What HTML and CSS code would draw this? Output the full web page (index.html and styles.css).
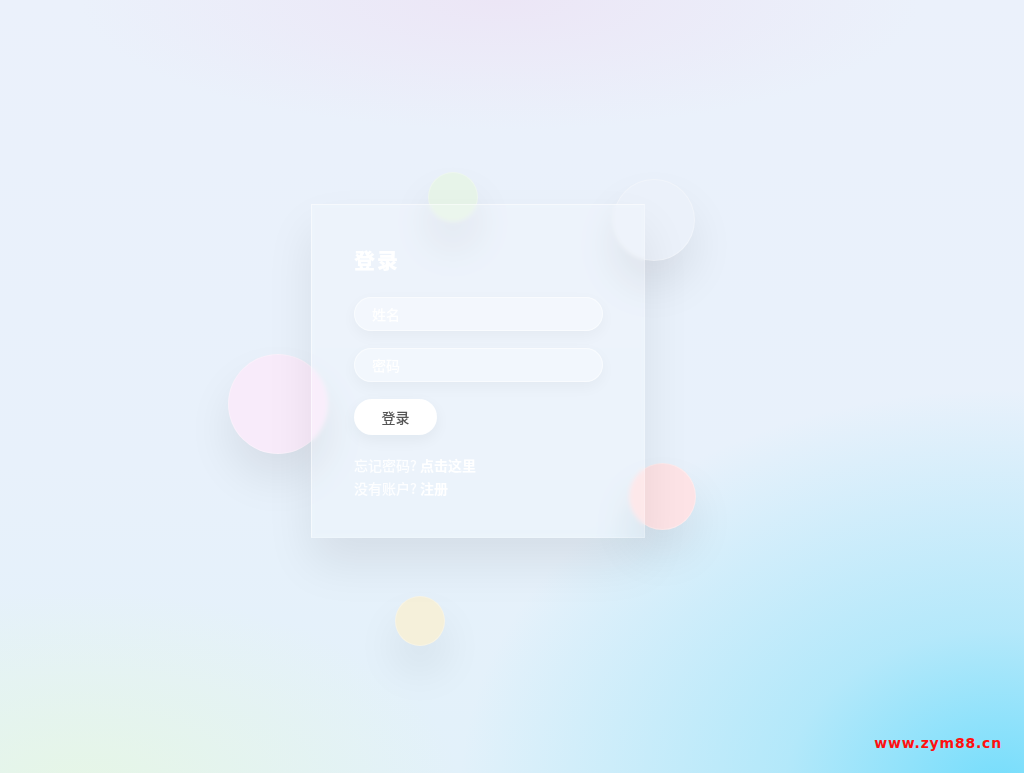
FILE: index.html
```html
<!DOCTYPE html>
<html lang="zh">
<head>
<meta charset="utf-8">
<title>登录</title>
<link rel="stylesheet" href="styles.css">
</head>
<body>
<div class="page">
  <div class="stage">
    <span class="bubble b-green"></span>
    <span class="bubble b-white"></span>
    <span class="bubble b-pink"></span>
    <span class="bubble b-red"></span>
    <span class="bubble b-yellow"></span>
    <form class="card">
      <h2 class="title">登录</h2>
      <input class="field" type="text" placeholder="姓名">
      <input class="field" type="password" placeholder="密码">
      <button class="btn" type="button">登录</button>
      <p class="link">忘记密码? <b>点击这里</b></p>
      <p class="link">没有账户? <b>注册</b></p>
    </form>
  </div>
  <div class="mark">www.zym88.cn</div>
</div>
</body>
</html>
```

FILE: styles.css
```css
html, body {
  margin: 0;
  padding: 0;
}
body {
  font-family: "Noto Sans CJK SC", "Noto Sans", sans-serif;
  width: 1024px;
  height: 773px;
  overflow: hidden;
}
.page {
  position: relative;
  width: 1024px;
  height: 773px;
  box-sizing: border-box;
  padding: 204px 0 0 311px;
  background:
    radial-gradient(ellipse 540px 400px at 1000px 790px, rgba(110, 220, 252, 0.95) 0%, rgba(140, 225, 250, 0.55) 40%, rgba(200, 235, 250, 0) 100%),
    radial-gradient(ellipse 380px 200px at 80px 790px, rgba(230, 246, 230, 1) 0%, rgba(232, 244, 238, 0) 100%),
    radial-gradient(ellipse 420px 130px at 500px 0px, rgba(236, 230, 246, 1) 0%, rgba(236, 232, 247, 0) 100%),
    linear-gradient(180deg, #ebf1fb 0%, #e8f1fb 60%, #e2f1fa 100%);
}
.stage {
  position: relative;
  width: 334px;
  height: 334px;
}
.bubble {
  position: absolute;
  border-radius: 50%;
  box-shadow: 0 25px 45px rgba(0, 0, 0, 0.08);
  border: 1px solid rgba(255, 255, 255, 0.3);
  box-sizing: border-box;
}
.b-green {
  left: 117px; top: -32px; width: 50px; height: 50px;
  background: #e7f4e9;
}
.b-white {
  left: 302px; top: -25px; width: 82px; height: 82px;
  background: #ebf1fa;
}
.b-pink {
  left: -83px; top: 150px; width: 100px; height: 100px;
  background: #f8ebfa;
}
.b-red {
  left: 318px; top: 259px; width: 67px; height: 67px;
  background: #fde3e6;
}
.b-yellow {
  left: 84px; top: 392px; width: 50px; height: 50px;
  background: #f5f0da;
}
.card {
  position: relative;
  width: 334px;
  height: 334px;
  box-sizing: border-box;
  margin: 0;
  padding: 38px 42px 0 42px;
  display: flex;
  flex-direction: column;
  align-items: flex-start;
  background: rgba(255, 255, 255, 0.18);
  border: 1px solid rgba(255, 255, 255, 0.5);
  border-right-color: rgba(255, 255, 255, 0.2);
  border-bottom-color: rgba(255, 255, 255, 0.2);
  box-shadow: 0 25px 45px rgba(0, 0, 0, 0.08);
  backdrop-filter: blur(2px);
}
.title {
  margin: 0 0 22px 0;
  font-size: 21px;
  line-height: 32px;
  font-weight: 900;
  letter-spacing: 2px;
  color: #ffffff;
}
.field {
  width: 249px;
  height: 34px;
  box-sizing: border-box;
  margin: 0 0 17px 0;
  padding: 0 17px;
  border-radius: 17px;
  border: 1px solid rgba(255, 255, 255, 0.5);
  background: rgba(255, 255, 255, 0.32);
  box-shadow: 0 5px 15px rgba(0, 0, 0, 0.04);
  font-family: inherit;
  font-size: 14px;
  font-weight: 500;
  color: #fff;
  outline: none;
}
.field::placeholder {
  color: #ffffff;
}
.btn {
  width: 83px;
  height: 36px;
  border: none;
  border-radius: 18px;
  background: #ffffff;
  box-shadow: 0 5px 15px rgba(0, 0, 0, 0.05);
  font-family: inherit;
  font-size: 14px;
  font-weight: 500;
  color: #555555;
  margin: 0 0 19px 0;
  padding: 0;
  cursor: pointer;
}
.link {
  margin: 0;
  font-size: 14px;
  line-height: 23px;
  font-weight: 500;
  color: rgba(255, 255, 255, 0.9);
}
.link b {
  font-weight: 700;
  color: #ffffff;
}
.mark {
  position: absolute;
  right: 22px;
  bottom: 22px;
  font-family: "DejaVu Sans", sans-serif;
  font-weight: 700;
  font-size: 14px;
  line-height: 16px;
  color: #ff1010;
  letter-spacing: 0.8px;
}
```
